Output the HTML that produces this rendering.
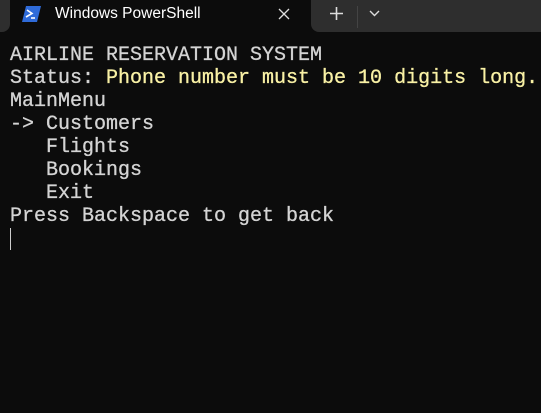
<!DOCTYPE html>
<html><head><style>
html,body{margin:0;padding:0;width:541px;height:413px;background:#0c0c0c;overflow:hidden;}
.g{position:absolute;background:#2e2e2e;}
.t{position:absolute;font-family:"Liberation Mono",monospace;font-size:20px;line-height:23px;color:#d4d4d4;white-space:pre;left:10px;top:44px;-webkit-text-stroke:0.3px #d4d4d4;}
.y{color:#f9f1a5;-webkit-text-stroke:0.3px #f9f1a5;}
</style></head><body>
<div class="g" style="left:0;top:0;width:10px;height:32px;border-bottom-right-radius:8px"></div>
<div class="g" style="left:311px;top:0;width:230px;height:32px;border-bottom-left-radius:8px"></div>
<div style="position:absolute;left:357px;top:6px;width:1px;height:22px;background:#444"></div>
<svg style="position:absolute;left:22px;top:5px" width="20" height="18" viewBox="0 0 20 18">
<path d="M4 1 H19 L15 17 H0 Z" fill="#2f6bd9"/>
<path d="M5 5 L10 8.5 L4 12" stroke="#fff" stroke-width="1.6" fill="none"/>
<path d="M9 13 H13" stroke="#fff" stroke-width="1.6"/>
</svg>
<div style="position:absolute;left:55px;top:5px;font-family:'Liberation Sans',sans-serif;font-size:15.5px;color:#fff;">Windows PowerShell</div>
<svg style="position:absolute;left:278px;top:8px" width="12" height="12"><path d="M1 1L11 11M11 1L1 11" stroke="#ddd" stroke-width="1.3"/></svg>
<svg style="position:absolute;left:330px;top:7px" width="13" height="13"><path d="M6.5 0V13M0 6.5H13" stroke="#ddd" stroke-width="1.6"/></svg>
<svg style="position:absolute;left:369px;top:10px" width="11" height="7"><path d="M1 1L5.5 5.5L10 1" stroke="#ddd" stroke-width="1.4" fill="none"/></svg>
<div class="t">AIRLINE RESERVATION SYSTEM
Status: <span class="y">Phone number must be 10 digits long.</span>
MainMenu
-> Customers
   Flights
   Bookings
   Exit
Press Backspace to get back</div>
<div style="position:absolute;left:10px;top:228px;width:1px;height:22px;background:#ccc"></div>
</body></html>
